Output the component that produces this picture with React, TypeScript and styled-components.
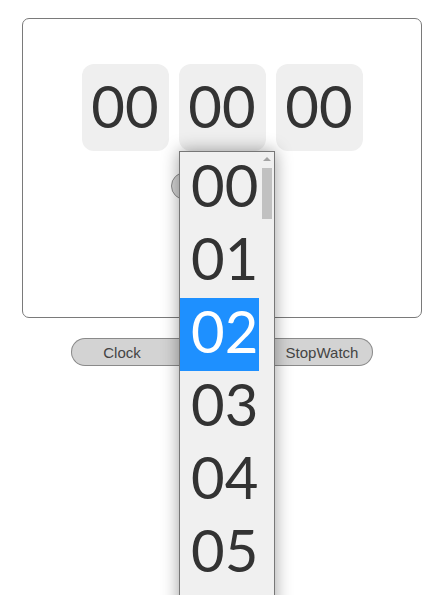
import React from "react";
import styled, { createGlobalStyle } from "styled-components";

const Global = createGlobalStyle`
  html, body { margin: 0; padding: 0; background: #fff; }
  body { font-family: "Liberation Sans", Arial, sans-serif; }
`;

const Page = styled.div`
  position: relative;
  width: 447px;
  height: 595px;
  overflow: hidden;
  padding: 18px 0 0 22px;
  box-sizing: border-box;
`;

const Card = styled.div`
  width: 400px;
  height: 300px;
  box-sizing: border-box;
  border: 1px solid #7a7a7a;
  border-radius: 7px;
  display: flex;
  flex-direction: column;
  align-items: center;
  padding-top: 45px;
`;

const DigitRow = styled.div`
  display: flex;
  gap: 10px;
`;

const DigitBox = styled.div`
  width: 87px;
  height: 87px;
  box-sizing: border-box;
  padding-bottom: 4px;
  border-radius: 12px;
  background: #efefef;
  display: flex;
  align-items: center;
  justify-content: center;
  font-family: Lato, "Liberation Sans", sans-serif;
  font-size: 58px;
  color: #333;
  line-height: 1;
`;

const StartButton = styled.div`
  margin-top: 21px;
  width: 102px;
  height: 28px;
  box-sizing: border-box;
  border: 1px solid #8a8a8a;
  border-radius: 14px;
  background: #d3d3d3;
`;

const ButtonGroup = styled.div`
  display: flex;
  margin: 20px 0 0 49px;
  width: 302px;
`;

const ModeButton = styled.div<{ $pos: "first" | "mid" | "last" }>`
  flex: 1;
  height: 28px;
  box-sizing: border-box;
  border: 1px solid #8a8a8a;
  ${(p) =>
    p.$pos === "mid"
      ? "border-left: none; border-right: none;"
      : p.$pos === "first"
      ? "border-right: none;"
      : "border-left: none;"}
  background: #d3d3d3;
  display: flex;
  align-items: center;
  justify-content: center;
  font-size: 15px;
  color: #444;
  border-radius: ${(p) =>
    p.$pos === "first" ? "14px 0 0 14px" : p.$pos === "last" ? "0 14px 14px 0" : "0"};
`;

const Listbox = styled.div`
  position: absolute;
  left: 179px;
  top: 151px;
  width: 96px;
  height: 470px;
  box-sizing: border-box;
  border: 1px solid #777;
  background: #f0f0f0;
  box-shadow: 0 0 16px rgba(0, 0, 0, 0.38);
  display: flex;
`;

const Options = styled.div`
  flex: 1;
  display: flex;
  flex-direction: column;
`;

const Option = styled.div<{ $selected?: boolean }>`
  height: 73px;
  flex: none;
  box-sizing: border-box;
  padding: 0 0 7px 11px;
  display: flex;
  align-items: center;
  font-family: Lato, "Liberation Sans", sans-serif;
  font-size: 58px;
  line-height: 1;
  color: ${(p) => (p.$selected ? "#fff" : "#333")};
  background: ${(p) => (p.$selected ? "#1e90ff" : "transparent")};
`;

const Scrollbar = styled.div`
  width: 15px;
  flex: none;
  display: flex;
  flex-direction: column;
  align-items: center;
  padding-top: 5px;
`;

const Arrow = styled.div`
  width: 0;
  height: 0;
  border-left: 4px solid transparent;
  border-right: 4px solid transparent;
  border-bottom: 4px solid #a3a3a3;
`;

const Thumb = styled.div`
  margin-top: 7px;
  width: 10px;
  height: 51px;
  background: #c1c1c1;
`;

export default function App() {
  const opts = ["00", "01", "02", "03", "04", "05"];
  return (
    <>
      <Global />
      <Page>
        <Card>
          <DigitRow>
            <DigitBox>00</DigitBox>
            <DigitBox>00</DigitBox>
            <DigitBox>00</DigitBox>
          </DigitRow>
          <StartButton />
        </Card>
        <ButtonGroup>
          <ModeButton $pos="first">Clock</ModeButton>
          <ModeButton $pos="mid" aria-label="Timer" />
          <ModeButton $pos="last">StopWatch</ModeButton>
        </ButtonGroup>
        <Listbox>
          <Options>
            {opts.map((o) => (
              <Option key={o} $selected={o === "02"}>
                {o}
              </Option>
            ))}
          </Options>
          <Scrollbar>
            <Arrow />
            <Thumb />
          </Scrollbar>
        </Listbox>
      </Page>
    </>
  );
}
